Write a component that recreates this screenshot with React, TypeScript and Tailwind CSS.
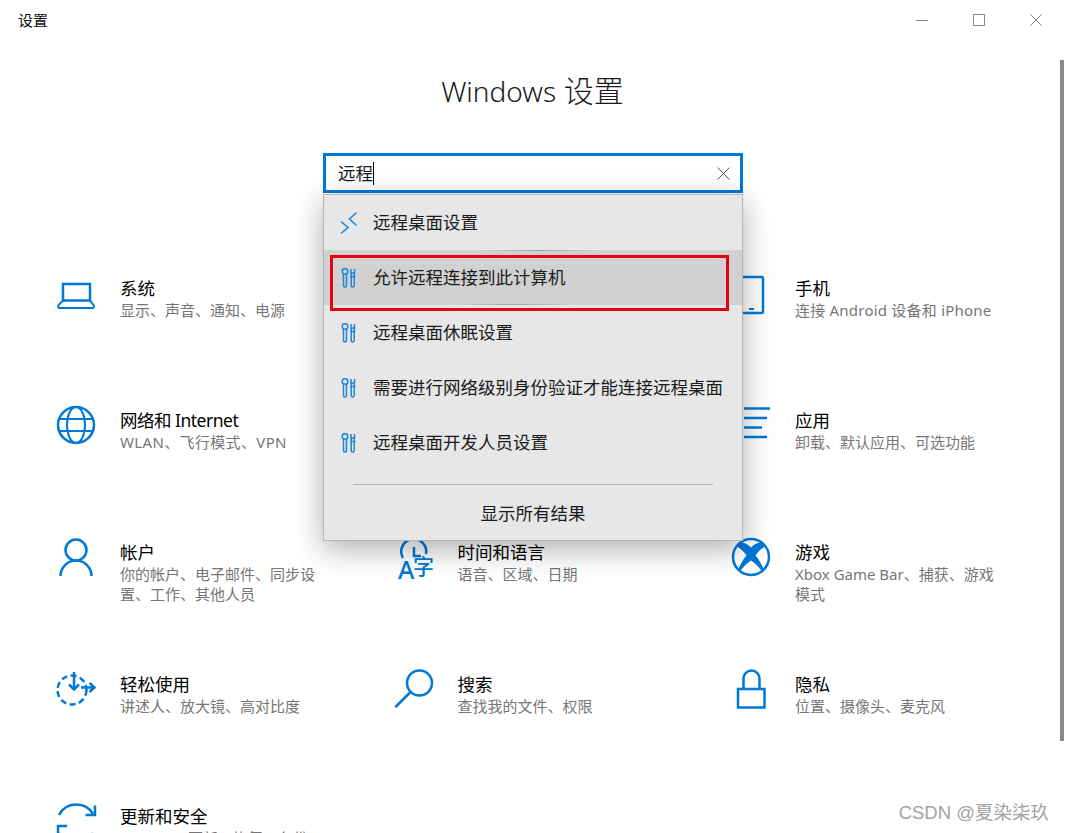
import type { ReactNode } from 'react';

const fontStack = { fontFamily: '"Noto Sans", "Noto Sans CJK SC", sans-serif' };

function Glyph({ children }: { children: ReactNode }) {
  return (
    <svg
      width="40"
      height="44"
      viewBox="0 0 40 44"
      fill="none"
      stroke="#0078d7"
      strokeWidth="2"
      className="shrink-0 -mt-1 overflow-visible"
    >
      {children}
    </svg>
  );
}

const icons: Record<string, ReactNode> = {
  laptop: (
    <>
      <rect x="7" y="12" width="27" height="16.5" strokeWidth="2.500" />
      <path d="M7 28.5 2.5 33Q1 36 4 36H36Q39 36 37.500 33L34 28.500" />
    </>
  ),
  phone: (
    <>
      <rect x="5" y="5" width="27" height="36" rx="1.500" strokeWidth="2.500" />
      <path d="M18 37h5" />
    </>
  ),
  globe: (
    <>
      <circle cx="20" cy="21" r="18" strokeWidth="2.500" />
      <ellipse cx="20" cy="21" rx="9" ry="18" />
      <path d="M4 15H36M4 27H36" />
    </>
  ),
  apps: (
    <>
      <path d="M13 4.500H39M13 14H36M13 23.500H31M13 33H36" strokeWidth="2.500" />
    </>
  ),
  person: (
    <>
      <circle cx="20" cy="14" r="10.500" strokeWidth="2.500" />
      <path d="M4.500 40A15.500 15.500 0 0 1 35.500 40" strokeWidth="2.500" />
    </>
  ),
  time: (
    <>
      <path d="M9 22A12.500 12.500 0 1 1 32 18" strokeWidth="2.500" />
      <path d="M20 11V20H27" strokeWidth="2.500" />
      <text x="4" y="43" fill="#0078d7" stroke="none" fontSize="25" fontWeight="500" style={fontStack}>
        A
      </text>
      <text x="19" y="38" fill="#0078d7" stroke="none" fontSize="21" fontWeight="500" style={fontStack}>
        字
      </text>
    </>
  ),
  xbox: (
    <>
      <circle cx="20" cy="21" r="18" strokeWidth="2.500" />
      <path
        d="M20 11.500C17 8.500 13.500 6 9 6.500L6 10.500C10 13 13.500 16 15.500 19.500C11.500 24 8.500 30 7 34L9 35.500C12 31 16 27 20 24.500C24 27 28 31 31 35.500L33 34C31.500 30 28.500 24 24.500 19.500C26.500 16 30 13 34 10.500L31 6.500C26.500 6 23 8.500 20 11.500Z"
        fill="#0078d7"
        stroke="none"
      />
    </>
  ),
  ease: (
    <>
      <circle cx="16" cy="22" r="14.500" strokeWidth="2.500" strokeDasharray="6 3.500" />
      <path d="M18 4V21M13 16.500 18 21.500 23 16.500" strokeWidth="2.500" />
      <path d="M25 19.500H38M33.500 15 38.500 19.500 33.500 24" strokeWidth="2.500" />
    </>
  ),
  search: (
    <>
      <circle cx="25.500" cy="15" r="12.500" strokeWidth="2.500" />
      <path d="M16 24.500 2 38.500" strokeWidth="2.500" strokeLinecap="round" />
    </>
  ),
  lock: (
    <>
      <rect x="7" y="21" width="26.500" height="18.500" strokeWidth="2.500" />
      <path d="M12.500 21V10.500A8 8 0 0 1 28.500 10.500V21" strokeWidth="2.500" />
    </>
  ),
  update: (
    <>
      <path d="M3 15A19.500 19.500 0 0 1 37 14" strokeWidth="2.500" />
      <path d="M39 5.500V15H29.500" strokeWidth="2.500" />
      <path d="M3 33A19.500 19.500 0 0 0 37 33" strokeWidth="2.500" />
      <path d="M2 35V26H11" strokeWidth="2.500" />
    </>
  ),
};

// null cells sit fully under the search popup
const settings = [
  { icon: 'laptop', title: '系统', sub: '显示、声音、通知、电源' },
  null,
  { icon: 'phone', title: '手机', sub: '连接 Android 设备和 iPhone', subClass: 'tracking-[0.22px]' },
  { icon: 'globe', title: '网络和 Internet', titleClass: 'tracking-[-0.5px]', sub: 'WLAN、飞行模式、VPN', subClass: 'tracking-[0.35px]' },
  null,
  { icon: 'apps', title: '应用', sub: '卸载、默认应用、可选功能' },
  { icon: 'person', title: '帐户', sub: '你的帐户、电子邮件、同步设置、工作、其他人员' },
  { icon: 'time', title: '时间和语言', sub: '语音、区域、日期' },
  { icon: 'xbox', title: '游戏', sub: 'Xbox Game Bar、捕获、游戏模式' },
  { icon: 'ease', title: '轻松使用', sub: '讲述人、放大镜、高对比度' },
  { icon: 'search', title: '搜索', sub: '查找我的文件、权限' },
  { icon: 'lock', title: '隐私', sub: '位置、摄像头、麦克风' },
  { icon: 'update', title: '更新和安全', sub: 'Windows 更新、恢复、备份' },
];

const results = [
  { kind: 'remote', label: '远程桌面设置' },
  { kind: 'tools', label: '允许远程连接到此计算机', active: true },
  { kind: 'tools', label: '远程桌面休眠设置' },
  { kind: 'tools', label: '需要进行网络级别身份验证才能连接远程桌面' },
  { kind: 'tools', label: '远程桌面开发人员设置' },
];

function ResultIcon({ kind }: { kind: string }) {
  if (kind === 'remote') {
    return (
      <svg width="18" height="24" viewBox="0 0 18 24" fill="none" stroke="#1f84d8" strokeWidth="1.600" className="shrink-0">
        <path d="M1 10.500 8 16.500 1 22.500" />
        <path d="M16.500 1.500 9.500 8 16.500 14.500" />
      </svg>
    );
  }
  return (
    <svg width="18" height="20" viewBox="0 0 18 20" fill="none" stroke="#1f84d8" strokeWidth="1.500" className="shrink-0">
      <circle cx="5" cy="3.500" r="2.800" />
      <path d="M3.500 6V17.500A1.500 1.500 0 0 0 6.500 17.500V6" />
      <path d="M11 1V5H14.500V1" />
      <path d="M10 8.500H15.500M11.200 5V8.500M14.200 5V8.500M11.200 8.500V17.500A1.500 1.500 0 0 0 14.200 17.500V8.500" />
    </svg>
  );
}

function WindowControls() {
  return (
    <div className="flex items-center gap-[45px] pr-[23px]">
      <svg width="12" height="12" viewBox="0 0 12 12" stroke="#8a8a8a" fill="none">
        <path d="M0 6.500H12" />
      </svg>
      <svg width="12" height="12" viewBox="0 0 12 12" stroke="#8a8a8a" fill="none">
        <rect x=".5" y=".5" width="11" height="11" />
      </svg>
      <svg width="12" height="12" viewBox="0 0 12 12" stroke="#8a8a8a" fill="none">
        <path d="M.5.500 11.500 11.500M11.500.500.500 11.500" />
      </svg>
    </div>
  );
}

function SearchPopup() {
  return (
    <div className="absolute left-0 top-[41px] z-10 w-[420px] h-[347px] bg-[#e7e7e7] border border-[#b5b5b5] shadow-[0_8px_28px_rgba(0,0,0,0.32)] text-[17.500px] text-[#1a1a1a]">
      {results.map((item) => (
        <div
          key={item.label}
          className={`relative flex items-center h-[55px] pl-4 ${item.active ? 'bg-[#d1d1d1]' : ''}`}
        >
          <ResultIcon kind={item.kind} />
          <span className="ml-[15px] whitespace-nowrap">{item.label}</span>
          {item.active && (
            <>
              <div className="absolute left-[160px] top-0 w-[110px] h-px bg-gradient-to-r from-transparent via-gray-400 to-transparent" />
              <div className="absolute left-[130px] bottom-0 w-[120px] h-px bg-gradient-to-r from-transparent via-gray-400 to-transparent" />
              <div className="absolute left-[6px] top-[5px] w-[399px] h-[56px] border-[3px] border-[#e60012]" />
            </>
          )}
        </div>
      ))}
      <div className="mx-[29px] mt-[14px] h-px bg-[#b3b3b3]" />
      <div className="flex items-center justify-center h-[56px]">显示所有结果</div>
    </div>
  );
}

function SettingCard({ icon, title, sub, titleClass = '', subClass = '' }: { icon: string; title: string; sub: string; titleClass?: string; subClass?: string }) {
  return (
    <div className="flex gap-6">
      <Glyph>{icons[icon]}</Glyph>
      <div className="w-[207px]">
        <div className={`text-[17.500px] leading-6 text-black whitespace-nowrap ${titleClass}`}>{title}</div>
        <div className={`text-[15px] leading-[20px] text-[#767676] ${subClass}`}>{sub}</div>
      </div>
    </div>
  );
}

export default function App() {
  return (
    <div className="relative flex flex-col w-[1065px] h-[833px] overflow-hidden bg-white" style={fontStack}>
      {/* Title bar */}
      <div className="shrink-0 flex items-center justify-between h-[40px] pl-[18px]">
        <span className="text-[15px] text-[#111]">设置</span>
        <WindowControls />
      </div>

      <h1 className="shrink-0 mt-[28px] h-[46px] text-center text-[30px] leading-[46px] font-light text-[#1a1a1a]">
        <span className="text-[28px]">Windows</span> 设置
      </h1>

      {/* Search */}
      <div className="shrink-0 relative mt-[39px] ml-[323px] w-[420px] h-[40px]">
        <div className="flex items-center h-full pl-3 pr-[10px] border-[3px] border-[#0078d7] bg-white">
          <span className="text-[17.500px] text-[#1a1a1a]">远程</span>
          <span className="w-px h-[23px] bg-black" />
          <svg width="13" height="13" viewBox="0 0 13 13" stroke="#555" fill="none" className="ml-auto">
            <path d="M.5.500 12.500 12.500M12.500.500.500 12.500" />
          </svg>
        </div>
        <SearchPopup />
      </div>

      {/* Settings grid */}
      <div className="shrink-0 grid grid-cols-[337.500px_337.500px_1fr] auto-rows-[132px] mt-[83px] pl-[56px]">
        {settings.map((item, index) =>
          item ? <SettingCard key={item.title} {...item} /> : <div key={index} />,
        )}
      </div>

      <div className="absolute right-[1px] top-[60px] w-[4px] h-[681px] bg-[#8a8a8a]" />
      <div className="absolute right-[16px] top-[800px] text-[18.500px] leading-[26px] text-[#a3a3a3] whitespace-nowrap" style={{ fontFamily: '"Liberation Sans", "Noto Sans CJK SC", sans-serif' }}>
        CSDN @夏染柒玖
      </div>
    </div>
  );
}
